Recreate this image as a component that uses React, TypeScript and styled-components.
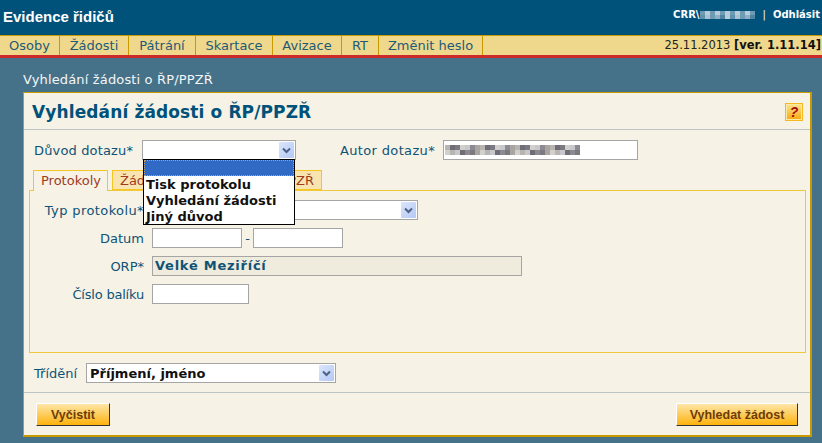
import styled, { createGlobalStyle } from "styled-components";

const Global = createGlobalStyle`
  html, body { margin: 0; padding: 0; background: #467289; }
  body { font-family: "DejaVu Sans", Verdana, sans-serif; font-size: 13px; overflow: hidden; }
  * { box-sizing: border-box; }
`;

const Page = styled.div`
  width: 822px;
  height: 443px;
  display: flex;
  flex-direction: column;
`;

const Header = styled.header`
  height: 35px;
  background: #00527a;
  color: #fff;
  display: flex;
  justify-content: space-between;
  padding: 0 2px 0 3px;
`;

const AppName = styled.h1`
  margin: 9px 0 0;
  font: bold 15px/16px "Liberation Sans", Arial, sans-serif;
`;

const UserBox = styled.div`
  margin-top: 9px;
  font-size: 10px;
  font-weight: bold;
  line-height: 12px;
  display: flex;
  align-items: center;
  height: 12px;
`;

const Sep = styled.span`
  margin: 0 7px 0 8px;
  font-weight: normal;
`;

const Menu = styled.nav`
  height: 23px;
  background: #efd88c;
  border-top: 1px solid #c99a00;
  border-bottom: 3px solid #cc2a2a;
  display: flex;
  align-items: stretch;
`;

const MenuItem = styled.a<{ $w: number }>`
  width: ${(p) => p.$w}px;
  flex: none;
  text-align: center;
  border-right: 1px solid #c99a00;
  color: #1c5a78;
  font-size: 13px;
  line-height: 19px;
  white-space: nowrap;
`;

const Stamp = styled.div`
  margin-left: auto;
  padding-right: 1px;
  font-size: 11.5px;
  line-height: 19px;
  color: #222;
  b { color: #111; }
`;

const Crumb = styled.div`
  margin: 14px 0 0 23px;
  height: 20px;
  color: #f4f6f7;
  font-size: 13px;
  letter-spacing: 0.15px;
  line-height: 15px;
`;

const Panel = styled.main`
  margin-left: 23px;
  width: 789px;
  height: 345px;
  background: #f6f2e6;
  border: 1px solid #c99a00;
  border-right-width: 2px;
  border-bottom-width: 2px;
  display: flex;
  flex-direction: column;
  color: #0e5376;
`;

const TitleBar = styled.div`
  height: 37px;
  flex: none;
  border-bottom: 1px solid #bcc4c4;
  display: flex;
  align-items: center;
  justify-content: space-between;
  padding: 1px 7px 0 8px;
`;

const Title = styled.h2`
  margin: 0;
  font-size: 17px;
  font-weight: bold;
  letter-spacing: 0.12px;
  color: #00527a;
`;

const Help = styled.span`
  width: 18px;
  height: 18px;
  border: 1px solid #f5b81e;
  outline: 1px solid #fbe9a6;
  outline-offset: -2px;
  background: linear-gradient(#fce58e, #f9a60f);
  color: #a50c0c;
  font: italic bold 14px/16px "Liberation Sans", Arial, sans-serif;
  text-align: center;
`;

const TopRow = styled.div`
  position: relative;
  display: flex;
  align-items: center;
  margin: 10px 0 0 10px;
  height: 20px;
`;

const Label = styled.label<{ $spread?: number }>`
  font-size: 13px;
  letter-spacing: ${(p) => p.$spread ?? 0}px;
  white-space: nowrap;
`;

const ReasonLabel = styled(Label)`
  width: 108px;
  flex: none;
`;

const AuthorLabel = styled(Label)`
  width: 103px;
  flex: none;
  margin-left: 44px;
`;

const Select = styled.div<{ $w: number }>`
  width: ${(p) => p.$w}px;
  height: 20px;
  flex: none;
  background: #fff;
  border: 1px solid #a5a5a5;
  display: flex;
  align-items: center;
  justify-content: space-between;
  padding: 0 1px 0 3px;
  color: #111;
  font-size: 13px;
  font-weight: bold;
`;

const Arrow = styled.span`
  width: 15px;
  height: 16px;
  background: linear-gradient(135deg, #dbe6fb, #b3c8f5);
  border-radius: 1px;
  display: flex;
  align-items: center;
  justify-content: center;
  color: #4d6185;
`;

const Input = styled.div<{ $w: number }>`
  width: ${(p) => p.$w}px;
  height: 20px;
  flex: none;
  background: #fff;
  border: 1px solid #a5a5a5;
`;

const BlurBox = styled(Input)`
  display: flex;
  align-items: center;
  padding-left: 1px;
`;

const ReadOnly = styled(Input)`
  background: #efebdd;
  color: #0e5376;
  font-weight: bold;
  font-size: 13px;
  letter-spacing: 0.75px;
  line-height: 18px;
  padding-left: 2px;
`;

const DropList = styled.ul`
  position: absolute;
  left: 109px;
  top: 19px;
  width: 152px;
  height: 66px;
  margin: 0;
  padding: 0;
  list-style: none;
  z-index: 5;
  background: #fff;
  border: 1px solid #000;
  color: #111;
  font-size: 13px;
  font-weight: bold;
  line-height: 15px;
`;

const DropItem = styled.li<{ $active?: boolean }>`
  height: 16px;
  padding: 1px 0 0 2px;
  background: ${(p) => (p.$active ? "#316ac5" : "transparent")};
  outline: ${(p) => (p.$active ? "1px dotted #c8a060" : "none")};
  outline-offset: -1px;
`;

const Tabs = styled.div`
  display: flex;
  gap: 4px;
  margin: 10px 0 0 9px;
  height: 20px;
  position: relative;
  z-index: 1;
`;

const Tab = styled.div<{ $active?: boolean; $w: number }>`
  width: ${(p) => p.$w}px;
  height: ${(p) => (p.$active ? 21 : 20)}px;
  border: 1px solid #f5c623;
  border-bottom: ${(p) => (p.$active ? "none" : "1px solid #f5c623")};
  background: ${(p) => (p.$active ? "#f6f2e6" : "#f9e4b0")};
  color: #a03a1e;
  font-size: 13px;
  line-height: 19px;
  padding: 0 7px;
  display: flex;
  justify-content: space-between;
  white-space: nowrap;
  overflow: hidden;
`;

const TabBody = styled.section`
  margin-left: 5px;
  width: 777px;
  height: 163px;
  flex: none;
  border: 1px solid #f0c83c;
  padding-top: 9px;
  display: flex;
  flex-direction: column;
  gap: 8px;
`;

const FormRow = styled.div`
  display: flex;
  align-items: center;
  gap: 8px;
  height: 20px;
`;

const RowLabel = styled(Label)`
  width: 114px;
  flex: none;
  text-align: right;
`;

const Dash = styled.span`
  width: 11px;
  text-align: center;
  margin: 0 -8px;
  flex: none;
`;

const SortRow = styled.div`
  display: flex;
  align-items: center;
  height: 20px;
  margin: 10px 0 9px 10px;
`;

const SortLabel = styled(Label)`
  width: 52px;
  flex: none;
`;

const Footer = styled.div`
  flex: 1;
  border-top: 1px solid #bcc4c4;
  display: flex;
  justify-content: space-between;
  align-items: flex-start;
  padding: 10px 12px 0 12px;
`;

const Button = styled.button<{ $w: number }>`
  width: ${(p) => p.$w}px;
  height: 23px;
  padding: 0;
  border: 1px solid;
  border-color: #fff #333 #333 #fff;
  background: linear-gradient(#fde6a8, #ffb20c);
  color: #6e3c06;
  font: bold 12.5px "Liberation Sans", Arial, sans-serif;
`;

const SelectArrow = () => (
  <Arrow>
    <svg width="9" height="7" viewBox="0 0 9 7">
      <path d="M1 1.5 L4.5 5 L8 1.5" fill="none" stroke="currentColor" strokeWidth="2" />
    </svg>
  </Arrow>
);

const Mosaic = ({ cells, colors, size = 5, height = 10 }: { cells: number; colors: string[]; size?: number; height?: number }) => (
  <svg width={cells * size} height={height} viewBox={`0 0 ${cells * size} ${height}`}>
    {Array.from({ length: cells }).map((_, i) => (
      <g key={i}>
        <rect x={i * size} y={0} width={size} height={height / 2} fill={colors[(i * 3) % colors.length]} />
        <rect x={i * size} y={height / 2} width={size} height={height / 2} fill={colors[(i * 5 + 2) % colors.length]} />
      </g>
    ))}
  </svg>
);

const menu = [
  { label: "Osoby", w: 60 },
  { label: "Žádosti", w: 69 },
  { label: "Pátrání", w: 67 },
  { label: "Skartace", w: 77 },
  { label: "Avizace", w: 69 },
  { label: "RT", w: 37 },
  { label: "Změnit heslo", w: 104 },
];

export default function App() {
  return (
    <Page>
      <Global />
      <Header>
        <AppName>Evidence řidičů</AppName>
        <UserBox>
          CRR\
          <Mosaic cells={11} size={5} height={8} colors={["#6d9ab4", "#a8c2d1", "#5f90ac", "#b7ccd8", "#4f84a2", "#8fb0c4"]} />
          <Sep>|</Sep>
          Odhlásit
        </UserBox>
      </Header>
      <Menu>
        {menu.map((m) => (
          <MenuItem key={m.label} $w={m.w}>{m.label}</MenuItem>
        ))}
        <Stamp>
          25.11.2013 <b>[ver. 1.11.14]</b>
        </Stamp>
      </Menu>
      <Crumb>Vyhledání žádosti o ŘP/PPZŘ</Crumb>
      <Panel>
        <TitleBar>
          <Title>Vyhledání žádosti o ŘP/PPZŘ</Title>
          <Help>?</Help>
        </TitleBar>
        <TopRow>
          <ReasonLabel $spread={0.15}>Důvod dotazu*</ReasonLabel>
          <Select $w={154}>
            <span />
            <SelectArrow />
          </Select>
          <AuthorLabel $spread={0.35}>Autor dotazu*</AuthorLabel>
          <BlurBox $w={195}>
            <Mosaic cells={27} size={5} colors={["#b8b4b0", "#8d8a94", "#d2d0cc", "#6f6e76", "#a9a6a2", "#c6c8cc", "#7c7a80"]} />
          </BlurBox>
          <DropList>
            <DropItem $active />
            <DropItem>Tisk protokolu</DropItem>
            <DropItem>Vyhledání žádosti</DropItem>
            <DropItem>Jiný důvod</DropItem>
          </DropList>
        </TopRow>
        <Tabs>
          <Tab $active $w={75}>Protokoly</Tab>
          <Tab $w={210}>
            <span>Žádosti</span>
            <span>ŘP/PPZŘ</span>
          </Tab>
        </Tabs>
        <TabBody>
          <FormRow>
            <RowLabel $spread={0.4}>Typ protokolu*</RowLabel>
            <Select $w={266}>
              <span />
              <SelectArrow />
            </Select>
          </FormRow>
          <FormRow>
            <RowLabel>Datum</RowLabel>
            <Input $w={90} />
            <Dash>-</Dash>
            <Input $w={90} />
          </FormRow>
          <FormRow>
            <RowLabel>ORP*</RowLabel>
            <ReadOnly $w={370}>Velké Meziříčí</ReadOnly>
          </FormRow>
          <FormRow>
            <RowLabel $spread={-0.2}>Číslo balíku</RowLabel>
            <Input $w={97} />
          </FormRow>
        </TabBody>
        <SortRow>
          <SortLabel>Třídění</SortLabel>
          <Select $w={250}>
            <span>Příjmení, jméno</span>
            <SelectArrow />
          </Select>
        </SortRow>
        <Footer>
          <Button $w={74}>Vyčistit</Button>
          <Button $w={122}>Vyhledat žádost</Button>
        </Footer>
      </Panel>
    </Page>
  );
}
